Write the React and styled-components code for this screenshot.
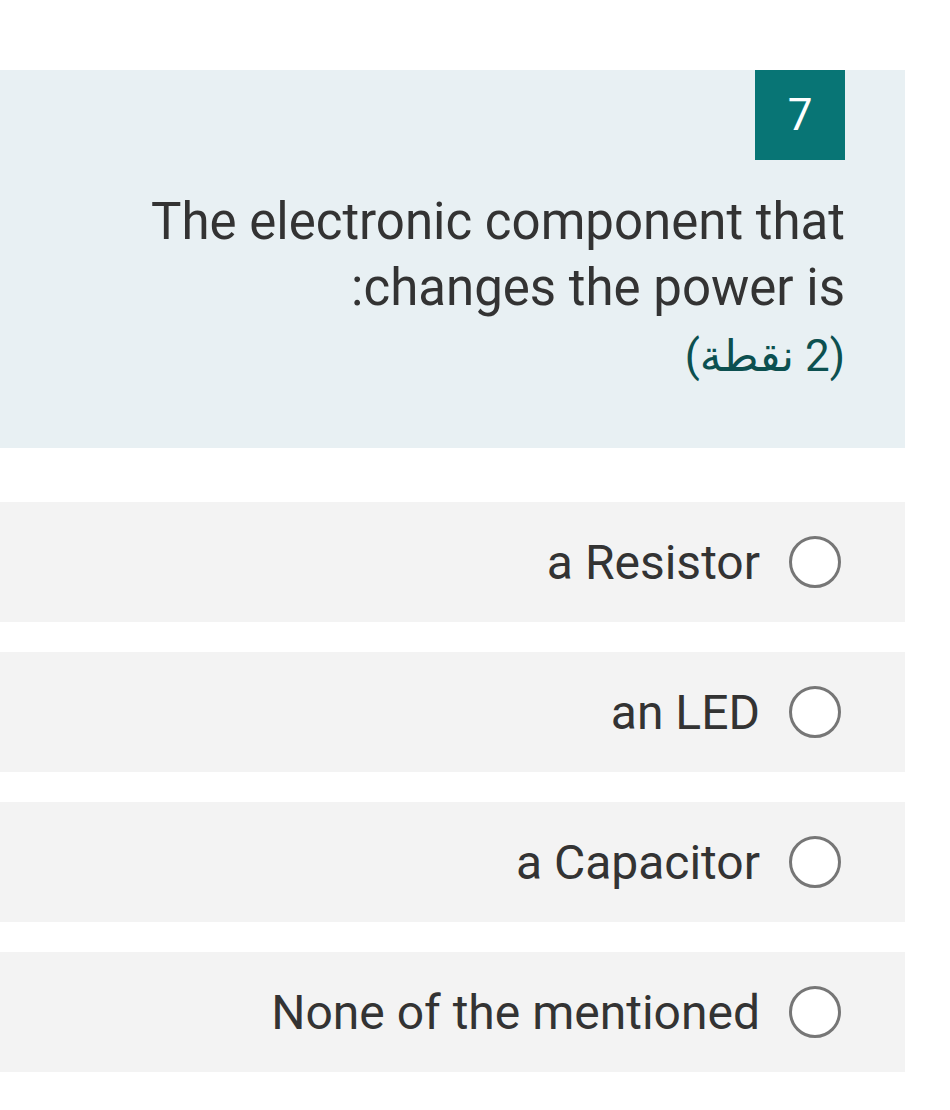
import React from 'react';
import styled, { createGlobalStyle } from 'styled-components';

const Global = createGlobalStyle`
  body {
    margin: 0;
    background: #ffffff;
    font-family: Roboto, "Noto Sans", "DejaVu Sans", sans-serif;
  }
`;

const Page = styled.div`
  width: 905px;
  padding-top: 70px;
  padding-bottom: 38px;
`;

const QuestionCard = styled.section`
  background: #e8f0f3;
  direction: rtl;
  padding: 0 60px 59px 0;
  display: flex;
  flex-direction: column;
  align-items: flex-start;
`;

const Badge = styled.div`
  width: 90px;
  height: 90px;
  background: #087575;
  color: #ffffff;
  font-size: 44px;
  display: flex;
  align-items: center;
  justify-content: center;
  margin-bottom: 29px;
`;

const Title = styled.div`
  font-size: 51px;
  line-height: 66px;
  color: #333333;
  text-align: right;
`;

const Points = styled.div`
  font-family: Roboto, "DejaVu Sans", sans-serif;
  font-size: 44px;
  line-height: 66px;
  color: #0c5050;
  margin-top: 2px;
`;

const Options = styled.div`
  margin-top: 54px;
  display: flex;
  flex-direction: column;
  gap: 30px;
`;

const OptionRow = styled.label`
  height: 120px;
  background: #f3f3f3;
  display: flex;
  align-items: center;
  justify-content: flex-end;
  gap: 29px;
  padding-right: 64px;
  cursor: pointer;
`;

const OptionText = styled.span`
  font-size: 48px;
  color: #333333;
`;

const Radio = styled.span`
  width: 52px;
  height: 52px;
  box-sizing: border-box;
  border-radius: 50%;
  border: 3px solid #767676;
  background: #ffffff;
  flex-shrink: 0;
`;

const answers = ['a Resistor', 'an LED', 'a Capacitor', 'None of the mentioned'];

export default function App() {
  return (
    <Page>
      <Global />
      <QuestionCard>
        <Badge>7</Badge>
        <Title>
          The electronic component that
          <br />
          changes the power is:
        </Title>
        <Points>(2 نقطة)</Points>
      </QuestionCard>
      <Options>
        {answers.map((a) => (
          <OptionRow key={a}>
            <OptionText>{a}</OptionText>
            <Radio />
          </OptionRow>
        ))}
      </Options>
    </Page>
  );
}
